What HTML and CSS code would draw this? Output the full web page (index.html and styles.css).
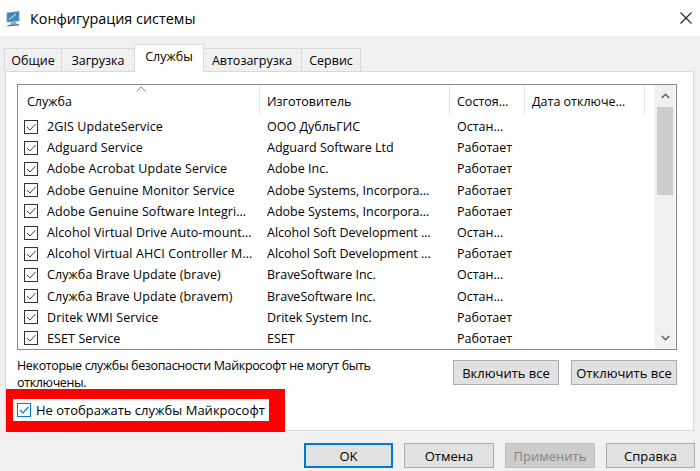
FILE: index.html
```html
<!DOCTYPE html>
<html lang="ru">
<head>
<meta charset="utf-8">
<title>Конфигурация системы</title>
<link rel="stylesheet" href="styles.css">
</head>
<body>
<div class="window">
  <div class="titlebar">
    <svg class="appicon" width="17" height="17" viewBox="0 0 17 17">
      <path d="M1.5 2.5 L14.5 1 L14.5 11.2 L1.5 12.6 Z" fill="#8a96a6"/>
      <path d="M2.6 3.4 L13.4 2.2 L13.4 10.2 L2.6 11.4 Z" fill="#2f86d6"/>
      <path d="M4 9.5 L11 4" stroke="#ffffff" stroke-width="1"/>
      <path d="M6 12.3 L11 11.7 L12 14.5 L5 15.3 Z" fill="#9aa4b0"/>
      <path d="M2.5 15 L14 14 L14 15.5 L2.5 16.6 Z" fill="#6c7683"/>
    </svg>
    <span class="title">Конфигурация системы</span>
    <svg class="close" width="12" height="12" viewBox="0 0 12 12">
      <path d="M0.5 0.5 L11.5 11.5 M11.5 0.5 L0.5 11.5" stroke="#222" stroke-width="1.1"/>
    </svg>
  </div>

  <div class="tabs">
    <div class="tab t1">Общие</div>
    <div class="tab t2">Загрузка</div>
    <div class="tab t3 active">Службы</div>
    <div class="tab t4">Автозагрузка</div>
    <div class="tab t5">Сервис</div>
  </div>

  <div class="panel">
    <div class="list">
      <div class="table">
        <div class="row head">
          <div class="c c1">Служба
            <svg class="sort" width="10" height="6" viewBox="0 0 10 6"><path d="M0.5 5.5 L5 1 L9.5 5.5" fill="none" stroke="#8a8a8a" stroke-width="1"/></svg>
          </div>
          <div class="c c2">Изготовитель</div>
          <div class="c c3">Состоя…</div>
          <div class="c c4">Дата отключе…</div>
          <div class="c c5"></div>
        </div>

        <div class="row"><div class="c c1"><span class="cb"><svg viewBox="0 0 12 12"><path d="M2 6 L5 9 L10.5 3" fill="none" stroke="#444" stroke-width="1"/></svg></span><span class="tx">2GIS UpdateService</span></div><div class="c c2">ООО ДубльГИС</div><div class="c c3">Остан…</div><div class="c c4"></div></div>
        <div class="row"><div class="c c1"><span class="cb"><svg viewBox="0 0 12 12"><path d="M2 6 L5 9 L10.5 3" fill="none" stroke="#444" stroke-width="1"/></svg></span><span class="tx">Adguard Service</span></div><div class="c c2">Adguard Software Ltd</div><div class="c c3">Работает</div><div class="c c4"></div></div>
        <div class="row"><div class="c c1"><span class="cb"><svg viewBox="0 0 12 12"><path d="M2 6 L5 9 L10.5 3" fill="none" stroke="#444" stroke-width="1"/></svg></span><span class="tx">Adobe Acrobat Update Service</span></div><div class="c c2">Adobe Inc.</div><div class="c c3">Работает</div><div class="c c4"></div></div>
        <div class="row"><div class="c c1"><span class="cb"><svg viewBox="0 0 12 12"><path d="M2 6 L5 9 L10.5 3" fill="none" stroke="#444" stroke-width="1"/></svg></span><span class="tx">Adobe Genuine Monitor Service</span></div><div class="c c2">Adobe Systems, Incorpora…</div><div class="c c3">Работает</div><div class="c c4"></div></div>
        <div class="row"><div class="c c1"><span class="cb"><svg viewBox="0 0 12 12"><path d="M2 6 L5 9 L10.5 3" fill="none" stroke="#444" stroke-width="1"/></svg></span><span class="tx">Adobe Genuine Software Integri…</span></div><div class="c c2">Adobe Systems, Incorpora…</div><div class="c c3">Работает</div><div class="c c4"></div></div>
        <div class="row"><div class="c c1"><span class="cb"><svg viewBox="0 0 12 12"><path d="M2 6 L5 9 L10.5 3" fill="none" stroke="#444" stroke-width="1"/></svg></span><span class="tx">Alcohol Virtual Drive Auto-mount…</span></div><div class="c c2">Alcohol Soft Development …</div><div class="c c3">Остан…</div><div class="c c4"></div></div>
        <div class="row"><div class="c c1"><span class="cb"><svg viewBox="0 0 12 12"><path d="M2 6 L5 9 L10.5 3" fill="none" stroke="#444" stroke-width="1"/></svg></span><span class="tx">Alcohol Virtual AHCI Controller M…</span></div><div class="c c2">Alcohol Soft Development …</div><div class="c c3">Работает</div><div class="c c4"></div></div>
        <div class="row"><div class="c c1"><span class="cb"><svg viewBox="0 0 12 12"><path d="M2 6 L5 9 L10.5 3" fill="none" stroke="#444" stroke-width="1"/></svg></span><span class="tx">Служба Brave Update (brave)</span></div><div class="c c2">BraveSoftware Inc.</div><div class="c c3">Остан…</div><div class="c c4"></div></div>
        <div class="row"><div class="c c1"><span class="cb"><svg viewBox="0 0 12 12"><path d="M2 6 L5 9 L10.5 3" fill="none" stroke="#444" stroke-width="1"/></svg></span><span class="tx">Служба Brave Update (bravem)</span></div><div class="c c2">BraveSoftware Inc.</div><div class="c c3">Остан…</div><div class="c c4"></div></div>
        <div class="row"><div class="c c1"><span class="cb"><svg viewBox="0 0 12 12"><path d="M2 6 L5 9 L10.5 3" fill="none" stroke="#444" stroke-width="1"/></svg></span><span class="tx">Dritek WMI Service</span></div><div class="c c2">Dritek System Inc.</div><div class="c c3">Работает</div><div class="c c4"></div></div>
        <div class="row"><div class="c c1"><span class="cb"><svg viewBox="0 0 12 12"><path d="M2 6 L5 9 L10.5 3" fill="none" stroke="#444" stroke-width="1"/></svg></span><span class="tx">ESET Service</span></div><div class="c c2">ESET</div><div class="c c3">Работает</div><div class="c c4"></div></div>
      </div>
      <div class="vscroll">
        <div class="arrow"><svg width="9" height="6" viewBox="0 0 9 6"><path d="M0.8 5 L4.5 1.3 L8.2 5" fill="none" stroke="#606060" stroke-width="1.6"/></svg></div>
        <div class="thumb"></div>
        <div class="track"></div>
        <div class="arrow"><svg width="9" height="6" viewBox="0 0 9 6"><path d="M0.8 1 L4.5 4.7 L8.2 1" fill="none" stroke="#606060" stroke-width="1.6"/></svg></div>
      </div>
    </div>

    <div class="below">
      <p class="note">Некоторые службы безопасности Майкрософт не могут быть<br>отключены.</p>
      <div class="btns">
        <button class="btn wide">Включить все</button>
        <button class="btn wide">Отключить все</button>
      </div>
    </div>

    <div class="highlight">
      <label class="hide">
        <span class="cb focus"><svg viewBox="0 0 12 12"><path d="M2 6 L5 9 L10.5 3" fill="none" stroke="#0078d7" stroke-width="1.2"/></svg></span>
        <span>Не отображать службы Майкрософт</span>
      </label>
    </div>
  </div>

  <div class="footer">
    <button class="btn def">OK</button>
    <button class="btn">Отмена</button>
    <button class="btn dis">Применить</button>
    <button class="btn">Справка</button>
  </div>
</div>
</body>
</html>
```

FILE: styles.css
```css
html, body {
  margin: 0;
  padding: 0;
}
body {
  width: 700px;
  height: 471px;
  overflow: hidden;
  background: #f0f0f0;
  font-family: "Open Sans", "Noto Sans", "DejaVu Sans", sans-serif;
  font-size: 12.5px;
  color: #000;
}
.window {
  width: 700px;
  height: 471px;
}

/* title bar */
.titlebar {
  height: 36px;
  background: #ffffff;
  display: flex;
  align-items: center;
}
.appicon {
  margin-left: 5px;
  margin-top: 1px;
}
.title {
  margin-left: 8px;
  font-size: 14.4px;
}
.close {
  margin-left: auto;
  margin-right: 8px;
}

/* tabs */
.tabs {
  display: flex;
  align-items: flex-end;
  height: 27px;
  margin-top: 8px;
  padding-left: 4px;
  position: relative;
  z-index: 2;
}
.tab {
  box-sizing: border-box;
  height: 23px;
  border: 1px solid #d9d9d9;
  border-bottom: none;
  background: #f0f0f0;
  margin-left: -1px;
  display: flex;
  align-items: center;
  justify-content: center;
  white-space: nowrap;
}
.tab.t1 { margin-left: 0; width: 58px; }
.tab.t2 { width: 74px; }
.tab.t3 { width: 70px; }
.tab.t4 { width: 100px; }
.tab.t5 { width: 60px; }
.tab.active {
  height: 28px;
  background: #ffffff;
  margin-bottom: -1px;
  margin-right: -1px;
  padding-bottom: 4px;
  position: relative;
}

/* panel */
.panel {
  box-sizing: border-box;
  height: 360px;
  margin: 0 6px 0 5px;
  background: #ffffff;
  border: 1px solid #d9d9d9;
  position: relative;
  z-index: 1;
}

/* list */
.list {
  box-sizing: border-box;
  width: 660px;
  height: 266px;
  margin: 12px 0 0 11px;
  border: 1px solid #828790;
  display: flex;
}
.table {
  width: 636px;
  overflow: hidden;
}
.row {
  display: flex;
  height: 21.2px;
  align-items: center;
  white-space: nowrap;
}
.row.head {
  height: 31px;
  align-items: stretch;
}
.c {
  box-sizing: border-box;
  overflow: hidden;
  white-space: nowrap;
  display: flex;
  align-items: center;
}
.c1 { width: 242px; padding-left: 6px; }
.c2 { width: 190px; padding-left: 7px; }
.c3 { width: 75px; padding-left: 7px; }
.c4 { width: 120px; padding-left: 7px; }
.c5 { flex: 1; }
.head .c {
  border-right: 1px solid #e5e5e5;
  padding-top: 2px;
  margin: 1px 0;
}
.head .c1 {
  padding-left: 9px;
  position: relative;
}
.head .c5 { border-right: none; }
.sort {
  position: absolute;
  left: 118px;
  top: 0px;
}
.tx {
  letter-spacing: 0.1px;
}
.cb {
  box-sizing: border-box;
  width: 14px;
  height: 14px;
  border: 1px solid #333333;
  background: #ffffff;
  display: inline-flex;
  align-items: center;
  justify-content: center;
  flex: none;
  margin-right: 9px;
}
.cb svg {
  width: 12px;
  height: 12px;
}
.cb.focus {
  border-color: #0078d7;
  margin-right: 5px;
}

/* scrollbar */
.vscroll {
  width: 20px;
  margin-left: 1px;
  background: #f0f0f0;
  display: flex;
  flex-direction: column;
}
.arrow {
  height: 22px;
  display: flex;
  align-items: center;
  justify-content: center;
}
.thumb {
  height: 88px;
  margin: 0 2px;
  background: #cdcdcd;
}
.track {
  flex: 1;
}

/* below list */
.below {
  display: flex;
  justify-content: space-between;
  height: 32px;
  margin-top: 7px;
  padding-left: 11px;
  padding-right: 16px;
}
.note {
  margin: 0;
  line-height: 17px;
  white-space: nowrap;
  letter-spacing: -0.35px;
}
.btns {
  display: flex;
  gap: 12px;
  margin-top: 3px;
}

.btn {
  box-sizing: border-box;
  height: 25px;
  width: 90px;
  padding: 0;
  background: #e1e1e1;
  border: 1px solid #adadad;
  font-family: inherit;
  font-size: 13px;
  color: #000;
}
.btn.wide {
  width: 106px;
}
.btn.def {
  border: 2px solid #0078d7;
}
.btn.dis {
  background: #cccccc;
  border-color: #bfbfbf;
  color: #838383;
}

/* red annotation */
.highlight {
  box-sizing: border-box;
  width: 279px;
  height: 43px;
  margin-left: 0;
  border-style: solid;
  border-color: #ff0000;
  border-width: 10px 16px 11px 7px;
  background: #ffffff;
  position: relative;
  z-index: 3;
}
.hide {
  display: flex;
  align-items: center;
  height: 22px;
  padding-left: 4px;
  font-size: 13px;
  white-space: nowrap;
}

/* footer */
.footer {
  display: flex;
  justify-content: flex-end;
  gap: 11px;
  margin-top: 12px;
  padding-right: 5px;
}
.footer .btn.def { width: 89px; }
.footer .btn:last-child { width: 89px; }
```
